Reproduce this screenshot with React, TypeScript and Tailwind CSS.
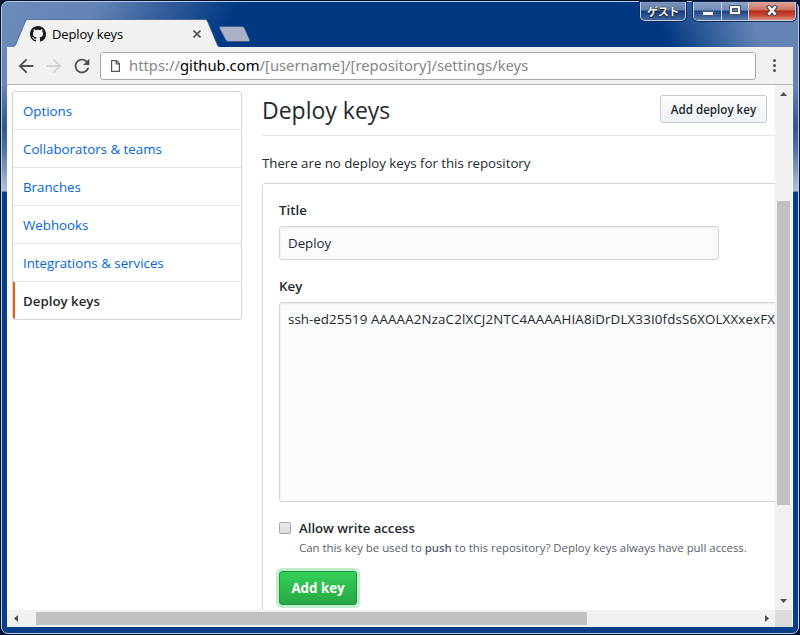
import type { ReactNode } from "react";
import { MdArrowBack, MdArrowForward, MdRefresh } from "react-icons/md";

const sections = ["Options", "Collaborators & teams", "Branches", "Webhooks", "Integrations & services", "Deploy keys"];

function GitHubMark() {
  return (
    <svg viewBox="0 0 16 16" className="size-4 fill-[#191717]">
      <path d="M8 0C3.58 0 0 3.58 0 8c0 3.54 2.29 6.53 5.47 7.59.4.07.55-.17.55-.38 0-.19-.01-.82-.01-1.49-2.01.37-2.53-.49-2.69-.94-.09-.23-.48-.94-.82-1.13-.28-.15-.68-.52-.01-.53.63-.01 1.08.58 1.23.82.72 1.21 1.87.87 2.33.66.07-.52.28-.87.51-1.07-1.78-.2-3.64-.89-3.64-3.95 0-.87.31-1.59.82-2.15-.08-.2-.36-1.02.08-2.12 0 0 .67-.21 2.2.82.64-.18 1.32-.27 2-.27s1.36.09 2 .27c1.53-1.04 2.2-.82 2.2-.82.44 1.1.16 1.92.08 2.12.51.56.82 1.27.82 2.15 0 3.07-1.87 3.75-3.65 3.95.29.25.54.73.54 1.48 0 1.07-.01 1.93-.01 2.2 0 .21.15.46.55.38A8.01 8.01 0 0 0 16 8c0-4.42-3.58-8-8-8z" />
    </svg>
  );
}

function WindowButtons() {
  return (
    <div className="flex items-start pr-[2px]">
      <div className="mr-[7px] flex h-[19px] w-[46px] items-center justify-center rounded-b-[5px] border border-t-0 border-[#c3d0e4] bg-[linear-gradient(#7f96bd_0,#5f7cab_45%,#153d7c_50%,#3d63a0)] pt-[1px] font-['Noto_Sans_CJK_JP',sans-serif] text-[11px] leading-none font-bold tracking-[-0.4px] text-[#f4f4f4] shadow-[0_0_0_1px_#122c58] [text-shadow:0_0_1px_#111,0_1px_1px_#111]">
        ゲスト
      </div>
      <div className="flex h-[19px] overflow-hidden rounded-b-[5px] border border-t-0 border-[#c3d0e4] shadow-[0_0_0_1px_#122c58]">
        <div className="flex w-[28px] items-center justify-center border-r border-[#c3d0e4] bg-[linear-gradient(#90a6c9_0,#6f8ab6_45%,#1e4582_50%,#5679ac)]">
          <span className="mt-[4px] h-[5px] w-[12px] rounded-[1px] border border-[#4c5468] bg-[#f5f5f5]" />
        </div>
        <div className="flex w-[27px] items-center justify-center border-r border-[#c3d0e4] bg-[linear-gradient(#90a6c9_0,#6f8ab6_45%,#1e4582_50%,#5679ac)]">
          <svg viewBox="0 0 12 10" className="-mt-[2px] h-[10px] w-[12px]">
            <rect x=".5" y=".5" width="11" height="9" fill="#f5f5f5" stroke="#4c5468" />
            <rect x="3.5" y="3.5" width="5" height="3" fill="#5878aa" stroke="#4c5468" />
          </svg>
        </div>
        <div className="flex w-[46px] items-center justify-center bg-[linear-gradient(#dba79d_0,#cd7565_42%,#b62e18_50%,#c84a35_75%,#db9484)]">
          <svg viewBox="0 0 12 11" className="-mt-[2px] h-[11px] w-[12px]">
            <path d="M3.2 2.3 8.800 8.700M8.800 2.300 3.200 8.700" stroke="#4c4454" strokeWidth="4.600" strokeLinecap="square" />
            <path d="M3.2 2.3 8.800 8.700M8.800 2.300 3.200 8.700" stroke="#f8f8f8" strokeWidth="2.500" strokeLinecap="square" />
          </svg>
        </div>
      </div>
    </div>
  );
}

function TitleBar() {
  return (
    <div className="flex h-[45px] items-start justify-between">
      <div className="flex h-full items-end pl-[12px]">
        <div className="relative h-[28px] w-[206px]">
          <svg viewBox="0 0 206 28" className="absolute inset-0 h-full w-full">
            <path d="M-7 28.5V27.5H-1C1 27.5 1.4 26.5 2.2 24.500L11 3.500C12 1 12.500.5 14 .5H191C192.500.5 193 1 194 3.500L203 25C204 27.500 205 28 206 28.500Z" fill="#f1f1f1" stroke="#1c4279" strokeOpacity=".6" />
          </svg>
          <div className="relative flex h-full items-center pt-[1px] pl-[16px]">
            <GitHubMark />
            <span className="ml-[6px] w-[141px] text-[13px] leading-[18px] tracking-[-0.14px] text-black">Deploy keys</span>
            <svg viewBox="0 0 8 8" className="size-[8px]">
              <path d="M.5.5l7 7M7.500.5l-7 7" stroke="#555" strokeWidth="1.700" />
            </svg>
          </div>
        </div>
        <svg viewBox="0 0 34 22" className="-ml-[2px] h-[22px] w-[34px]">
          <path d="M2.500 1.500H24q1.800 0 2.500 1.800L31.500 14.500q.8 2-1 2H10.500q-2.200 0-3-2L1.500 3q-.5-1.500 1-1.500Z" fill="#a8b4c6" stroke="#365587" strokeOpacity=".6" />
        </svg>
      </div>
      <WindowButtons />
    </div>
  );
}

function Toolbar() {
  return (
    <div className="flex h-[38px] shrink-0 items-center border-b border-[#b3b3b3] bg-[#f1f1f1] pl-[8px]">
      <MdArrowBack className="size-[22px] text-[#505050]" />
      <MdArrowForward className="ml-[6px] size-[22px] text-[#d2d2d2]" />
      <MdRefresh className="ml-[6px] size-[22px] text-[#505050]" />
      <div className="ml-[7px] flex h-[28px] w-[656px] items-center rounded-[3px] border border-[#a9a9a9] bg-white pl-[10px]">
        <svg viewBox="0 0 9 12" className="h-[12px] w-[9px]" fill="none" stroke="#555" strokeWidth="1.200">
          <path d="M.6.6h4.900l2.900 2.900v7.900H.6zM5.200.6v3.200h3.200" />
        </svg>
        <span className="-mt-[2px] ml-[9px] font-['Noto_Sans',sans-serif] text-[14.8px] leading-5 whitespace-nowrap text-[#858585]">
          https://<span className="text-black">github.com</span>/[username]/[repository]/settings/keys
        </span>
      </div>
      <div className="ml-[17px] flex flex-col gap-[2px]">
        {[0, 1, 2].map((n) => (
          <span key={n} className="size-[3px] rounded-full bg-[#505050]" />
        ))}
      </div>
    </div>
  );
}

function Sidebar() {
  return (
    <nav className="h-[229px] w-[230px] shrink-0 overflow-hidden rounded-[3px] border border-[#d1d5da]">
      {sections.map((name) =>
        name === "Deploy keys" ? (
          <div key={name} className="flex h-[37px] items-center border-l-2 border-[#e36209] pt-[2px] pl-[8px] font-semibold text-[#24292e]">
            {name}
          </div>
        ) : (
          <div key={name} className="flex h-[38px] items-center border-b border-[#e1e4e8] pt-[2px] pl-[10px] text-[#0366d6]">
            {name}
          </div>
        ),
      )}
    </nav>
  );
}

function Label({ children }: { children: ReactNode }) {
  return <div className="h-[20px] leading-[20px] font-semibold">{children}</div>;
}

function Content() {
  return (
    <main className="ml-[20px] w-[760px] shrink-0">
      <div className="flex h-[45px] items-start border-b border-[#e1e4e8]">
        <h1 className="w-[398px] text-[23px] leading-[39px]">Deploy keys</h1>
        <button className="mt-[4px] h-[28px] w-[107px] rounded-[3px] border border-[#c8cbcf] bg-[linear-gradient(#fafbfc,#eff3f6)] pt-[1px] text-[11.600px] leading-[18px] font-semibold whitespace-nowrap">
          Add deploy key
        </button>
      </div>
      <p className="mt-[17px] h-[30px] leading-[20px] tracking-[-0.03px]">There are no deploy keys for this repository</p>
      <section className="h-[460px] rounded-[3px] border border-[#d1d5da] px-[16px] pt-[16px]">
        <Label>Title</Label>
        <div className="mt-[6px] flex h-[34px] w-[440px] items-center rounded-[3px] border border-[#d1d5da] bg-[#fafbfc] px-[8px] pt-[2px] shadow-[inset_0_1px_2px_rgba(27,31,35,0.075)]">
          Deploy
        </div>
        <div className="mt-[16px]">
          <Label>Key</Label>
        </div>
        <div className="mt-[6px] h-[200px] rounded-[3px] border border-[#d1d5da] bg-[#fafbfc] px-[8px] pt-[6px] leading-[20px] tracking-[0.16px] whitespace-nowrap shadow-[inset_0_1px_2px_rgba(27,31,35,0.075)]">
          <span className="tracking-[0.06px]">ssh-ed25519 </span>AAAAA2NzaC2lXCJ2NTC4AAAAHIA8iDrDLX33I0fdsS6XOLXXxexFX
        </div>
        <div className="mt-[16px] flex">
          <span className="mt-[4px] size-[12px] rounded-[2px] border border-[#a5a5a5] bg-[linear-gradient(#ececec,#dcdcdc)]" />
          <div className="ml-[8px] whitespace-nowrap">
            <div className="text-[13.2px] leading-[20px] font-semibold">Allow write access</div>
            <div className="text-[11.400px] leading-[20px] text-[#586069]">
              Can this key be used to <strong className="font-semibold">push</strong> to this repository? Deploy keys always have pull access.
            </div>
          </div>
        </div>
        <button className="mt-[13px] h-[34px] w-[78px] rounded-[3px] border border-[#269041] bg-[linear-gradient(#34d058,#28a745)] leading-[20px] font-bold text-white shadow-[0_0_0_3px_#bfefca]">
          Add key
        </button>
      </section>
    </main>
  );
}

function VerticalScrollbar() {
  return (
    <div className="flex w-[17px] shrink-0 flex-col items-center bg-[#f1f1f1]">
      <svg viewBox="0 0 17 17" className="h-[17px] w-[17px] fill-[#505050]">
        <path d="M5 11h7L8.500 7z" />
      </svg>
      <div className="mt-[99px] h-[304px] w-[13px] bg-[#c1c1c1]" />
      <svg viewBox="0 0 17 17" className="mt-auto h-[17px] w-[17px] fill-[#505050]">
        <path d="M5 6h7l-3.500 4z" />
      </svg>
    </div>
  );
}

function HorizontalScrollbar() {
  return (
    <div className="flex h-[17px] shrink-0 items-center bg-[#f1f1f1] pr-[1px] pl-[1px]">
      <svg viewBox="0 0 17 17" className="h-[17px] w-[17px] fill-[#505050]">
        <path d="M10 5v7L6 8.500z" />
      </svg>
      <div className="ml-[11px] h-[13px] w-[551px] bg-[#c1c1c1]" />
      <svg viewBox="0 0 17 17" className="ml-auto h-[17px] w-[17px] fill-[#505050]">
        <path d="M7 5v7l4-3.500z" />
      </svg>
      <div className="h-full w-[17px] bg-[#dcdcdc]" />
    </div>
  );
}

export default function App() {
  return (
    <div className="h-[635px] w-[800px] overflow-hidden bg-[#04142e] px-[1px] pt-[1px] pb-[1px] font-['Open_Sans','Noto_Sans',sans-serif] text-[13.300px] text-[#24292e]">
      <div className="flex h-[633px] w-[798px] flex-col rounded-[7px] border border-[#b9cbe2] bg-[linear-gradient(115deg,#6b8bbb_0,#6484b5_85px,rgba(0,56,130,0)_215px),linear-gradient(245deg,#6484b5_0,#6484b5_50px,rgba(0,56,130,0)_135px),linear-gradient(#003882_0,#003882_83px,#6484b5_84px,#31588f_125px,#4a6da3_145px,#b3c3da_189px,#083f88_190px,#083f88)] bg-no-repeat [background-size:400px_84px,400px_84px,100%_100%] [background-position:0_0,100%_0,0_0]">
        <TitleBar />
        <div className="mx-[5px] flex w-[786px] flex-1 flex-col overflow-hidden bg-white">
          <Toolbar />
          <div className="flex h-[525px] shrink-0">
            <div className="flex w-[768px] shrink-0 overflow-hidden pt-[6px] pl-[5px]">
              <Sidebar />
              <Content />
            </div>
            <VerticalScrollbar />
          </div>
          <HorizontalScrollbar />
        </div>
        <div className="h-[6px] shrink-0" />
      </div>
    </div>
  );
}
